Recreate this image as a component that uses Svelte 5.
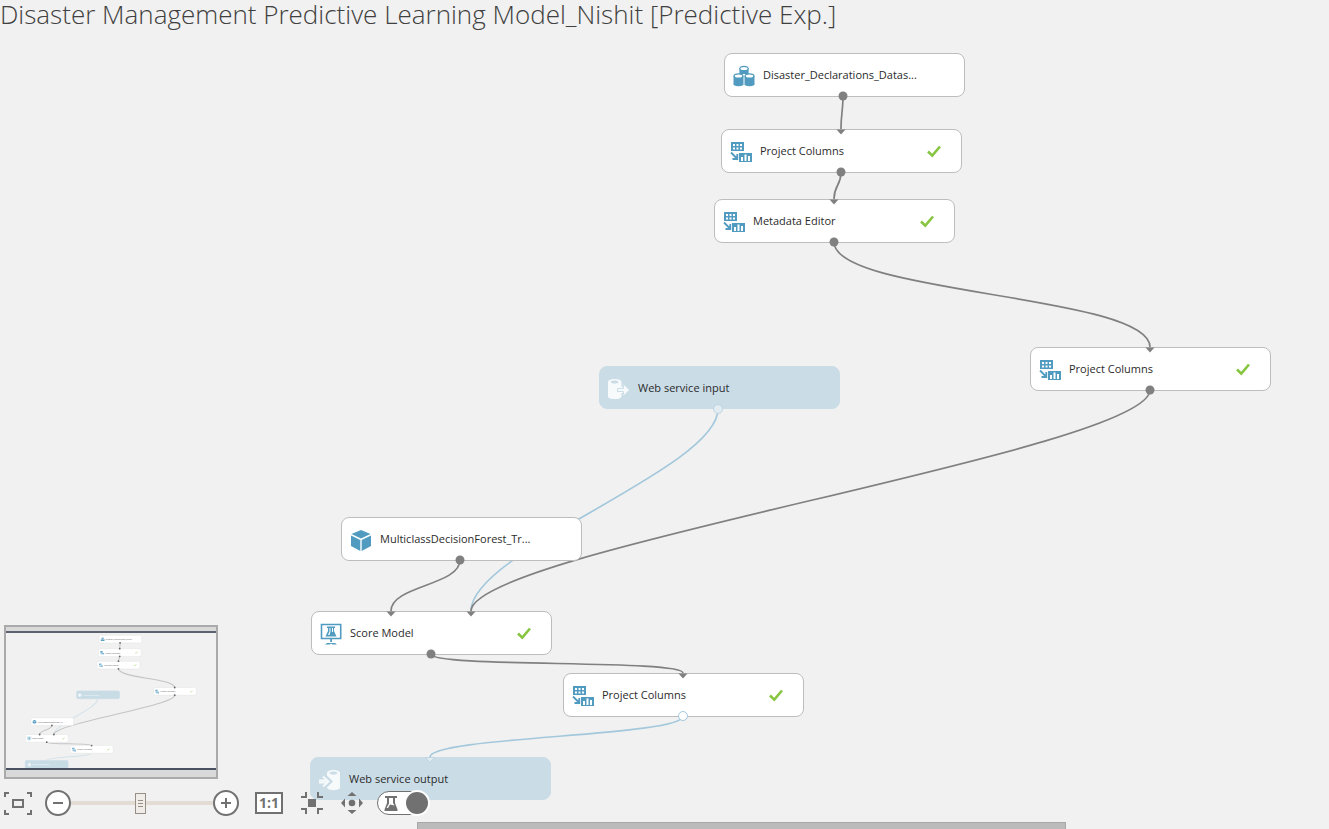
<script>
  const NODE_W = 241;
  const NODE_H = 44;

  const nodes = [
    { x: 724, y: 21, label: 'Disaster_Declarations_Datas...', icon: 'dataset' },
    { x: 721, y: 97, label: 'Project Columns', icon: 'columns', done: true },
    { x: 714, y: 167, label: 'Metadata Editor', icon: 'columns', done: true },
    { x: 1030, y: 315, label: 'Project Columns', icon: 'columns', done: true },
    { x: 599, y: 334, label: 'Web service input', icon: 'input', web: true },
    { x: 341, y: 485, label: 'MulticlassDecisionForest_Tr...', icon: 'model' },
    { x: 311, y: 579, label: 'Score Model', icon: 'score', done: true },
    { x: 563, y: 641, label: 'Project Columns', icon: 'columns', done: true },
    { x: 310, y: 725, label: 'Web service output', icon: 'output', web: true }
  ];

  const edges = [
    { from: [843, 64], to: [841, 97] },
    { from: [841, 140], to: [834, 167] },
    { from: [834, 210], to: [1150, 315] },
    { from: [718, 377], to: [471, 579], web: true },
    { from: [1150, 358], to: [471, 579] },
    { from: [460, 528], to: [391, 579] },
    { from: [431, 622], to: [683, 641] },
    { from: [683, 684], to: [430, 725], web: true }
  ];

  const outputs = [
    { x: 843, y: 64 },
    { x: 841, y: 140 },
    { x: 834, y: 210 },
    { x: 1150, y: 358 },
    { x: 718, y: 377, kind: 'faint' },
    { x: 460, y: 528 },
    { x: 431, y: 622 },
    { x: 683, y: 684, kind: 'open' }
  ];

  const inputs = [
    { x: 841, y: 97 },
    { x: 834, y: 167 },
    { x: 1150, y: 315 },
    { x: 391, y: 579 },
    { x: 471, y: 579 },
    { x: 683, y: 641 },
    { x: 430, y: 725, kind: 'faint' }
  ];

  let zoom = $state(49);
  let webView = $state(true);

  function curve({ from, to }) {
    const reach = Math.min(60, Math.max(14, (to[1] - from[1]) / 2));
    return `M${from[0]} ${from[1]}C${from[0]} ${from[1] + reach} ${to[0]} ${to[1] - reach} ${to[0]} ${to[1]}`;
  }
</script>

{#snippet glyph(name)}
  {#if name === 'dataset'}
    <g fill="#519bc0">
      <path d="M6.400 6v6h9.200V6zM.500 14v9q5 2.500 10 0v-9zM11.500 14v9q5 2.500 10 0v-9z" />
      <ellipse cx="11" cy="6.500" rx="4.600" ry="2.700" />
      <ellipse cx="5.500" cy="14" rx="5" ry="2.700" />
      <ellipse cx="16.500" cy="14" rx="5" ry="2.700" />
    </g>
    <g fill="#fff">
      <ellipse cx="11" cy="6.400" rx="3.600" ry="1.500" />
      <ellipse cx="5.500" cy="14" rx="3.700" ry="1.500" />
      <ellipse cx="16.500" cy="14" rx="3.700" ry="1.500" />
    </g>
  {:else if name === 'columns'}
    <path
      fill="#519bc0"
      fill-rule="evenodd"
      d="M1 4h13v9H1zM3 6v2h2V6zM6.500 6v2h2V6zM10 6v2h2V6zM3 9.500v2h2v-2zM6.500 9.500v2h2v-2zM10 9.500v2h2v-2zM9 15h13v9H9zM11 19v4h2v-4zM14.500 16.500V23h2v-6.500zM18 18v5h2v-5z"
    />
    <path fill="none" stroke="#519bc0" stroke-width="1.800" d="M1 14.500l6 6M7.300 16v5H2.500" />
  {:else if name === 'model'}
    <path fill="#519bc0" d="M11 4l9.500 4-9.500 4.500L1.500 8zM1 9.500l9.300 4.500v11L1 20zM21 9.500l-9.300 4.500v11L21 20z" />
  {:else if name === 'score'}
    <path fill="none" stroke="#519bc0" stroke-width="1.600" d="M1.500 4.500h19.200v14H1.500z" />
    <path fill="#519bc0" d="M10.200 19h1.800v3h-1.800zM5 24.500l2-1.500h8l2 1.500h-4.500l-1.400-1-1.400 1z" />
    <path fill="#519bc0" fill-rule="evenodd" d="M7 6.500h8V8h-1v3l2.500 5.500h-11L8 11V8H7zM9.500 8v3.500L8 15h1.500l1-3.500V8zM12 8v4h1V8z" />
  {:else if name === 'input'}
    <path fill="#f7fafb" fill-rule="evenodd" d="M0 7C0 3 13.500 3 13.500 7v5h2V9.500L21 15l-5.500 5.500V18h-2v3.500c0 3.500-13.500 3.500-13.500 0zM2.700 7c1 2 7 2 8 0-1-2-7-2-8 0z" />
    <path fill="none" stroke="#cadce6" d="M9.500 13.500h6V11M9.500 16.500h6V19M9.500 13.500v3" />
  {:else if name === 'output'}
    <path fill="#f7fafb" fill-rule="evenodd" d="M8 7c0-4 13-4 13 0v14.500c0 3.500-13 3.500-13 0zM10.500 7c1 2 7 2 8 0-1-2-7-2-8 0z" />
    <path fill="none" stroke="#cadce6" stroke-width="3.500" d="M6 10l5.500 5.500L6 21" />
    <path fill="none" stroke="#f7fafb" stroke-width="1.800" d="M0 14.500h9M0 16.700h9M4 10.500l5.500 5-5.500 5" />
  {/if}
{/snippet}

{#snippet check()}
  <path fill="none" stroke="#87c540" stroke-width="2.600" d="M1 6.500l4.300 4.200L13 1.500" />
{/snippet}

<main class="workspace">
  <h1>Disaster Management Predictive Learning Model_Nishit [Predictive Exp.]</h1>

  <section class="stage" aria-label="Experiment canvas">
    <svg class="layer" aria-hidden="true">
      {#each edges as edge}
        <path class="edge" class:web={edge.web} d={curve(edge)} />
      {/each}
    </svg>

    {#each nodes as node}
      <div class="node" class:web={node.web} style:left="{node.x}px" style:top="{node.y}px">
        <svg width="22" height="26" viewBox="0 0 22 26" aria-hidden="true">{@render glyph(node.icon)}</svg>
        <span class="label">{node.label}</span>
        {#if node.done}
          <svg width="14" height="13" viewBox="0 0 14 13" aria-hidden="true">{@render check()}</svg>
        {/if}
      </div>
    {/each}

    <svg class="layer" aria-hidden="true">
      {#each outputs as port}
        <circle class="port {port.kind ?? ''}" cx={port.x} cy={port.y} r="4.500" />
      {/each}
      {#each inputs as port}
        <path class="port {port.kind ?? ''}" d="M{port.x - 4.5} {port.y + 0.5}h9l-4.500 5z" />
      {/each}
    </svg>

    <div class="dock">
      <div class="minimap">
        <svg viewBox="202 9 1180 758" aria-hidden="true">
          {#each edges as edge}
            <path class="mini-edge" class:web={edge.web} d={curve(edge)} />
          {/each}
          {#each nodes as node}
            <g transform="translate({node.x} {node.y})">
              <rect class="mini-node" class:web={node.web} width={NODE_W} height={NODE_H} rx="8" />
              <g transform="translate(10 9)">{@render glyph(node.icon)}</g>
              <text class="mini-label" class:web={node.web} x="39" y="27">{node.label}</text>
              {#if node.done}
                <g transform="translate(207 16)">{@render check()}</g>
              {/if}
            </g>
          {/each}
          {#each [...outputs, ...inputs] as port}
            {#if !port.kind}
              <circle cx={port.x} cy={port.y} r="5" fill="#666" />
            {/if}
          {/each}
        </svg>
      </div>

      <div class="toolbar">
        <div class="nav">
          <button aria-label="Zoom to fit">
            <svg width="28" height="24" viewBox="0 0 28 24" fill="none" stroke="#717171" stroke-width="2">
              <path d="M5 2H1v4M23 2h4v4M5 23H1v-4M23 23h4v-4M9 9h10v7H9z" />
            </svg>
          </button>
          <div class="zoom">
            <button aria-label="Zoom out">
              <svg width="26" height="26" viewBox="0 0 26 26" fill="#fff" stroke="#717171" stroke-width="2">
                <circle cx="13" cy="13" r="12" /><path d="M8 13h10" />
              </svg>
            </button>
            <input type="range" min="0" max="100" bind:value={zoom} aria-label="Zoom level" />
            <button aria-label="Zoom in">
              <svg width="26" height="26" viewBox="0 0 26 26" fill="#fff" stroke="#717171" stroke-width="2">
                <circle cx="13" cy="13" r="12" /><path d="M8 13h10M13 8v10" />
              </svg>
            </button>
          </div>
        </div>

        <div class="modes">
          <div class="view">
            <button class="actual">1:1</button>
            <button aria-label="Center selection">
              <svg width="22" height="22" viewBox="0 0 22 22">
                <path fill="none" stroke="#717171" stroke-width="2" d="M0 5h5V0M22 5h-5V0M0 17h5v5M22 17h-5v5" />
                <path fill="#717171" d="M7 7h8v8H7z" />
              </svg>
            </button>
            <button aria-label="Pan">
              <svg width="22" height="22" viewBox="0 0 22 22" fill="#717171">
                <circle cx="11" cy="11" r="3.300" />
                <path d="M6.500 4L11 0l4.500 4zM6.500 18l4.500 4 4.500-4zM4 6.500L0 11l4 4.500zM18 6.500l4 4.500-4 4.500z" />
              </svg>
            </button>
          </div>
          <label class="toggle">
            <input type="checkbox" bind:checked={webView} aria-label="Web service view" />
            <svg width="14" height="16" viewBox="0 0 14 16" aria-hidden="true">
              <path fill="#717171" d="M1 1h12v2h-2v5l2.500 6.500V16H.500v-1.500L3 8V3H1z" />
              <path fill="#fff" d="M5 3h4v5l1.500 2.500L6 9.500l-2 3.500H2.500L5 8.500z" />
            </svg>
            <span class="knob"></span>
          </label>
        </div>
      </div>
    </div>

    <div class="scrollbar"></div>
  </section>
</main>

<style>
  :global(body) {
    margin: 0;
    background: #f1f1f1;
  }

  .workspace {
    display: flex;
    flex-direction: column;
    min-height: 100vh;
    color: #2b2b2b;
    font: 11px/16px 'Open Sans', 'Noto Sans', sans-serif;
  }

  h1 {
    margin: 0;
    padding-bottom: 4px;
    color: #404040;
    font-size: 26px;
    font-weight: 300;
    line-height: 28px;
  }

  .stage {
    position: relative;
    flex: 1;
    min-height: 780px;
    overflow: hidden;
  }

  .layer {
    position: absolute;
    inset: 0;
    width: 100%;
    height: 100%;
    pointer-events: none;
  }

  .edge {
    fill: none;
    stroke: #808080;
    stroke-width: 1.7;
  }

  .edge.web {
    stroke: #a3c8dc;
  }

  .node {
    position: absolute;
    display: flex;
    align-items: center;
    gap: 8px;
    box-sizing: border-box;
    width: 241px;
    height: 44px;
    padding: 0 20px 0 8px;
    border: 1px solid #bdbdbd;
    border-radius: 8px;
    background: #fff;
  }

  .node.web {
    height: 43px;
    border-color: #cadce6;
    background: #cadce6;
  }

  .label {
    flex: 1;
    white-space: nowrap;
  }

  .port {
    fill: #808080;
  }

  .port.open {
    fill: #fff;
    stroke: #a3c8dc;
  }

  .port.faint {
    fill: #e2ecf1;
    stroke: #bdd5e2;
  }

  .dock {
    position: absolute;
    left: 4px;
    bottom: 13px;
    display: flex;
    flex-direction: column;
    align-items: flex-start;
    gap: 11px;
  }

  .minimap {
    padding: 4px 0 7px;
    border: 2px solid #aaa;
    background: #d9d9d9;
  }

  .minimap svg {
    display: block;
    width: 210px;
    height: 135px;
    border-top: 2px solid #5b6270;
    border-bottom: 2px solid #4a5160;
    background: #f1f1f1;
  }

  .mini-edge {
    fill: none;
    stroke: #c4c4c4;
    stroke-width: 6;
  }

  .mini-edge.web {
    stroke: #d3e2ea;
  }

  .mini-node {
    fill: #fff;
    stroke: #e4e4e4;
    stroke-width: 3;
  }

  .mini-node.web {
    fill: #c8dce6;
    stroke: #c8dce6;
  }

  .mini-label {
    fill: #555;
  }

  .mini-label.web {
    fill: #fff;
  }

  .toolbar,
  .nav,
  .zoom,
  .modes,
  .view {
    display: flex;
    align-items: center;
  }

  .toolbar {
    gap: 16px;
  }

  .nav {
    gap: 13px;
  }

  .modes {
    gap: 14px;
  }

  .view {
    gap: 18px;
  }

  button {
    display: block;
    padding: 0;
    border: 0;
    background: none;
    cursor: pointer;
  }

  button svg {
    display: block;
  }

  .actual {
    box-sizing: border-box;
    width: 28px;
    height: 22px;
    border: 2px solid #717171;
    background: #fff;
    color: #717171;
    font: 700 14px/18px 'Open Sans', sans-serif;
  }

  input[type='range'] {
    width: 142px;
    height: 22px;
    margin: 0;
    appearance: none;
    background: linear-gradient(#e2dcd5, #e2dcd5) center / 100% 4px no-repeat;
  }

  input[type='range']::-webkit-slider-thumb {
    appearance: none;
    box-sizing: border-box;
    width: 11px;
    height: 21px;
    border: 1px solid #968f88;
    background:
      linear-gradient(#968f88, #968f88) center 6px / 5px 1px no-repeat,
      linear-gradient(#968f88, #968f88) center 9px / 5px 1px no-repeat,
      linear-gradient(#968f88, #968f88) center 12px / 5px 1px no-repeat,
      #f0ece8;
  }

  .toggle {
    display: flex;
    align-items: center;
    justify-content: space-between;
    box-sizing: border-box;
    width: 52px;
    height: 24px;
    padding-left: 6px;
    border: 1px solid #717171;
    border-radius: 12px;
    background: #fff;
    cursor: pointer;
  }

  .toggle input {
    position: absolute;
    opacity: 0;
    pointer-events: none;
  }

  .knob {
    width: 22px;
    height: 22px;
    border-radius: 50%;
    background: #717171;
    box-shadow: 0 0 0 2px #fff;
  }

  .scrollbar {
    position: absolute;
    bottom: 0;
    left: 31.4%;
    box-sizing: border-box;
    width: 48.8%;
    height: 7px;
    border: 1px solid #a8a8a8;
    border-bottom: 0;
    background: #bbb;
  }
</style>
